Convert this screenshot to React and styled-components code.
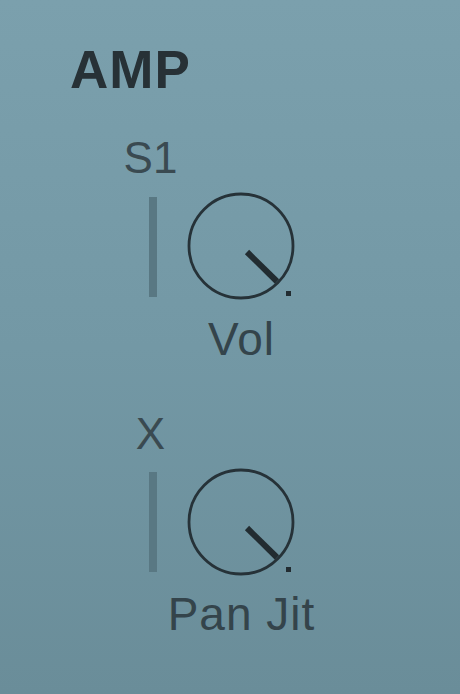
import React from "react";
import styled, { createGlobalStyle } from "styled-components";

const GlobalStyle = createGlobalStyle`
  html, body {
    margin: 0;
    padding: 0;
  }
  body {
    min-height: 100vh;
    background: linear-gradient(180deg, #7ba0ad 0%, #7398a5 50%, #6a8d99 100%);
    font-family: "Liberation Sans", Arial, sans-serif;
  }
`;

const controls = [
  { tag: "S1", name: "Vol" },
  { tag: "X", name: "Pan Jit" },
];

function Knob() {
  return (
    <KnobSvg width="112" height="112" viewBox="0 0 112 112">
      <circle cx="55" cy="55" r="52" fill="none" stroke="#263238" strokeWidth="2.8" />
      <line x1="61" y1="61" x2="91" y2="90.5" stroke="#222c31" strokeWidth="6" />
      <rect x="100" y="100" width="5" height="5" fill="#222c31" />
    </KnobSvg>
  );
}

function Control({ tag, name }) {
  return (
    <ControlBox>
      <Tag>{tag}</Tag>
      <span />
      <Side>
        <Bar />
      </Side>
      <Knob />
      <span />
      <Name>{name}</Name>
    </ControlBox>
  );
}

export default function App() {
  return (
    <>
      <GlobalStyle />
      <Panel>
        <Title>AMP</Title>
        <Controls>
          {controls.map((c) => (
            <Control key={c.tag} tag={c.tag} name={c.name} />
          ))}
        </Controls>
      </Panel>
    </>
  );
}

const Panel = styled.div`
  padding: 43px 0 0 70px;
`;

const Title = styled.div`
  font-size: 53px;
  line-height: 1;
  font-weight: bold;
  letter-spacing: 1px;
  color: #273136;
`;

const Controls = styled.div`
  display: flex;
  flex-direction: column;
  gap: 50px;
  margin-top: 40px;
  margin-left: 53px;
`;

const ControlBox = styled.div`
  display: grid;
  grid-template-columns: 60px 112px;
  column-gap: 2.5px;
`;

const Tag = styled.div`
  display: flex;
  justify-content: center;
  padding-right: 5px;
  font-size: 44px;
  line-height: 1;
  height: 44px;
  color: #3a4a51;
  margin-bottom: 11px;
`;

const Side = styled.div`
  display: flex;
  justify-content: center;
`;

const Bar = styled.div`
  width: 8px;
  height: 100px;
  margin-top: 5.5px;
  background: #597883;
`;

const KnobSvg = styled.svg`
  display: block;
`;

const Name = styled.div`
  display: flex;
  justify-content: center;
  white-space: nowrap;
  font-size: 46px;
  line-height: 1;
  height: 46px;
  letter-spacing: 1px;
  color: #34444b;
  margin-top: 12.5px;
`;
